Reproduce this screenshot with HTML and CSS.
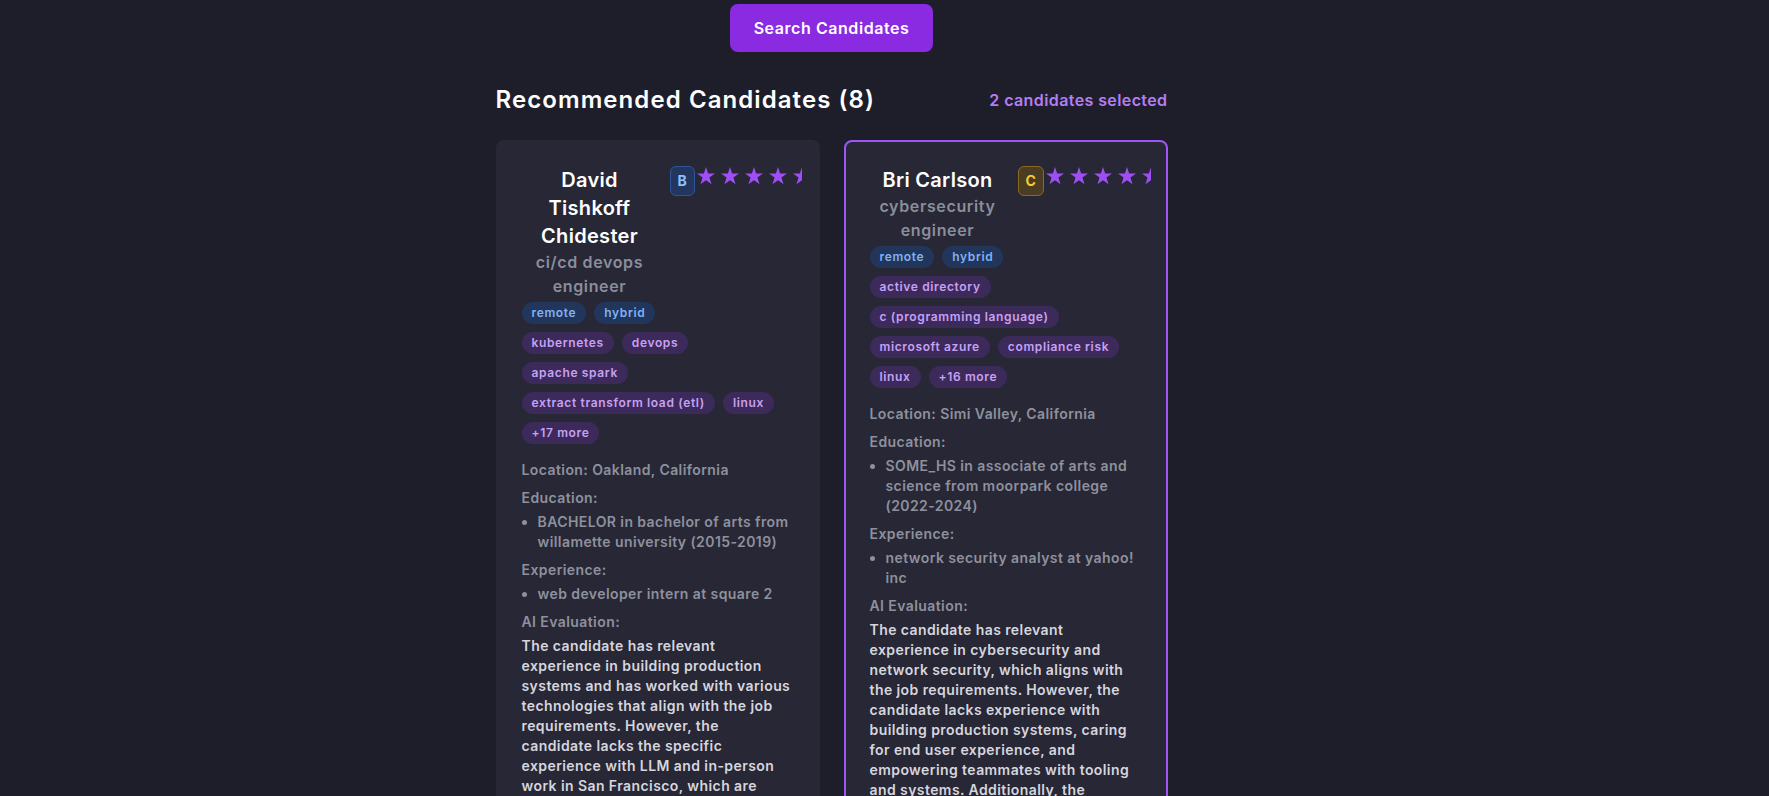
FILE: index.html
```html
<!DOCTYPE html>
<html lang="en">
<head>
<meta charset="utf-8">
<title>Recommended Candidates</title>
<link rel="stylesheet" href="styles.css">
</head>
<body>
<div class="page">
  <main class="content">
    <div class="actions">
      <button class="search-btn" type="button">Search Candidates</button>
    </div>

    <div class="results-head">
      <h2 class="results-title">Recommended Candidates (8)</h2>
      <span class="selected-count">2 candidates selected</span>
    </div>

    <div class="grid">
      <article class="card">
        <div class="card-head">
          <div class="who">
            <h3 class="name">David Tishkoff Chidester</h3>
            <p class="role">ci/cd devops engineer</p>
          </div>
          <div class="rating">
            <span class="grade grade-b">B</span>
            <span class="stars">
              <svg class="star" viewBox="0 0 20 20"><polygon points="10,1 12.13,7.56 19.03,7.56 13.45,11.62 15.58,18.19 10,14.13 4.42,18.19 6.55,11.62 0.97,7.56 7.87,7.56"/></svg>
              <svg class="star" viewBox="0 0 20 20"><polygon points="10,1 12.13,7.56 19.03,7.56 13.45,11.62 15.58,18.19 10,14.13 4.42,18.19 6.55,11.62 0.97,7.56 7.87,7.56"/></svg>
              <svg class="star" viewBox="0 0 20 20"><polygon points="10,1 12.13,7.56 19.03,7.56 13.45,11.62 15.58,18.19 10,14.13 4.42,18.19 6.55,11.62 0.97,7.56 7.87,7.56"/></svg>
              <svg class="star" viewBox="0 0 20 20"><polygon points="10,1 12.13,7.56 19.03,7.56 13.45,11.62 15.58,18.19 10,14.13 4.42,18.19 6.55,11.62 0.97,7.56 7.87,7.56"/></svg>
              <span class="half-star"><svg class="star" viewBox="0 0 20 20"><polygon points="10,1 12.13,7.56 19.03,7.56 13.45,11.62 15.58,18.19 10,14.13 4.42,18.19 6.55,11.62 0.97,7.56 7.87,7.56"/></svg></span>
            </span>
          </div>
        </div>

        <div class="tags">
          <span class="tag tag-blue">remote</span>
          <span class="tag tag-blue">hybrid</span>
        </div>
        <div class="tags">
          <span class="tag tag-purple">kubernetes</span>
          <span class="tag tag-purple">devops</span>
          <span class="tag tag-purple">apache spark</span>
          <span class="tag tag-purple">extract transform load (etl)</span>
          <span class="tag tag-purple">linux</span>
          <span class="tag tag-purple">+17 more</span>
        </div>

        <div class="details">
          <p>Location: Oakland, California</p>
          <div class="section">
            <p class="label">Education:</p>
            <ul class="list">
              <li>BACHELOR in bachelor of arts from willamette university (2015-2019)</li>
            </ul>
          </div>
          <div class="section">
            <p class="label">Experience:</p>
            <ul class="list">
              <li>web developer intern at square 2</li>
            </ul>
          </div>
          <div class="section">
            <p class="label">AI Evaluation:</p>
            <p class="eval">The candidate has relevant experience in building production systems and has worked with various technologies that align with the job requirements. However, the candidate lacks the specific experience with LLM and in-person work in San Francisco, which are important for this role.</p>
          </div>
        </div>
      </article>

      <article class="card selected">
        <div class="card-head">
          <div class="who">
            <h3 class="name">Bri Carlson</h3>
            <p class="role">cybersecurity engineer</p>
          </div>
          <div class="rating">
            <span class="grade grade-c">C</span>
            <span class="stars">
              <svg class="star" viewBox="0 0 20 20"><polygon points="10,1 12.13,7.56 19.03,7.56 13.45,11.62 15.58,18.19 10,14.13 4.42,18.19 6.55,11.62 0.97,7.56 7.87,7.56"/></svg>
              <svg class="star" viewBox="0 0 20 20"><polygon points="10,1 12.13,7.56 19.03,7.56 13.45,11.62 15.58,18.19 10,14.13 4.42,18.19 6.55,11.62 0.97,7.56 7.87,7.56"/></svg>
              <svg class="star" viewBox="0 0 20 20"><polygon points="10,1 12.13,7.56 19.03,7.56 13.45,11.62 15.58,18.19 10,14.13 4.42,18.19 6.55,11.62 0.97,7.56 7.87,7.56"/></svg>
              <svg class="star" viewBox="0 0 20 20"><polygon points="10,1 12.13,7.56 19.03,7.56 13.45,11.62 15.58,18.19 10,14.13 4.42,18.19 6.55,11.62 0.97,7.56 7.87,7.56"/></svg>
              <span class="half-star"><svg class="star" viewBox="0 0 20 20"><polygon points="10,1 12.13,7.56 19.03,7.56 13.45,11.62 15.58,18.19 10,14.13 4.42,18.19 6.55,11.62 0.97,7.56 7.87,7.56"/></svg></span>
            </span>
          </div>
        </div>

        <div class="tags">
          <span class="tag tag-blue">remote</span>
          <span class="tag tag-blue">hybrid</span>
        </div>
        <div class="tags">
          <span class="tag tag-purple">active directory</span>
          <span class="tag tag-purple">c (programming language)</span>
          <span class="tag tag-purple">microsoft azure</span>
          <span class="tag tag-purple">compliance risk</span>
          <span class="tag tag-purple">linux</span>
          <span class="tag tag-purple">+16 more</span>
        </div>

        <div class="details">
          <p>Location: Simi Valley, California</p>
          <div class="section">
            <p class="label">Education:</p>
            <ul class="list">
              <li>SOME_HS in associate of arts and science from moorpark college (2022-2024)</li>
            </ul>
          </div>
          <div class="section">
            <p class="label">Experience:</p>
            <ul class="list">
              <li>network security analyst at yahoo! inc</li>
            </ul>
          </div>
          <div class="section">
            <p class="label">AI Evaluation:</p>
            <p class="eval">The candidate has relevant experience in cybersecurity and network security, which aligns with the job requirements. However, the candidate lacks experience with building production systems, caring for end user experience, and empowering teammates with tooling and systems. Additionally, the candidate does not have experience with LLM technologies.</p>
          </div>
        </div>
      </article>
    </div>
  </main>
</div>
</body>
</html>
```
FILE: styles.css
```css
* { box-sizing: border-box; }

html, body { margin: 0; }

body {
  background: #1e1e2b;
  font-family: Inter, "Open Sans", "Liberation Sans", sans-serif;
  letter-spacing: 0.04em;
  color: #ffffff;
}

.page {
  display: flex;
  justify-content: center;
  padding: 4px 106px 40px 0;
}

.content {
  width: 672px;
}

.actions {
  display: flex;
  justify-content: center;
  margin-bottom: 32px;
}

.search-btn {
  background: #8a2be2;
  color: #ffffff;
  border: 0;
  border-radius: 8px;
  padding: 12px 24px;
  font-family: inherit;
  font-size: 16px;
  line-height: 24px;
  font-weight: 600;
  letter-spacing: 0.035em;
}

.results-head {
  display: flex;
  justify-content: space-between;
  align-items: center;
  margin-bottom: 24px;
}

.results-title {
  margin: 0;
  font-size: 24px;
  line-height: 32px;
  font-weight: 600;
  letter-spacing: 0.045em;
  color: #ffffff;
}

.selected-count {
  color: #b47df4;
  font-size: 16px;
  line-height: 24px;
  font-weight: 600;
  letter-spacing: 0.025em;
}

.grid {
  display: grid;
  grid-template-columns: 1fr 1fr;
  gap: 24px;
  align-items: start;
}

.card {
  background: #272736;
  border: 2px solid transparent;
  border-radius: 8px;
  padding: 24px;
}

.card.selected {
  border-color: #a056f5;
}

.card-head {
  display: grid;
  grid-template-columns: minmax(0, 1fr) minmax(0, 1fr);
}

.who {
  min-width: 0;
  text-align: center;
}

.name {
  margin: 0;
  font-size: 20px;
  line-height: 28px;
  font-weight: 600;
  letter-spacing: 0.015em;
  color: #ffffff;
}

.role {
  margin: 0;
  font-size: 16px;
  line-height: 24px;
  font-weight: 600;
  color: #8b8e9a;
}

.rating {
  min-width: 0;
  display: flex;
  align-items: flex-start;
  padding-left: 12px;
  white-space: nowrap;
}

.grade {
  display: inline-block;
  border: 1px solid;
  border-radius: 6px;
  padding: 4px 7px;
  font-size: 14px;
  line-height: 20px;
  font-weight: 700;
  letter-spacing: 0;
}

.grade-b {
  background: #23365e;
  border-color: #2d5597;
  color: #8fc0f7;
}

.grade-c {
  background: #4a3d24;
  border-color: #8b6a20;
  color: #f5cd2e;
}

.stars {
  display: flex;
  gap: 4px;
  margin-left: 1px;
}

.star {
  display: block;
  width: 20px;
  height: 20px;
  fill: #9d4ef5;
  flex: none;
}

.half-star {
  display: block;
  width: 10px;
  overflow: hidden;
}

.tags {
  display: flex;
  flex-wrap: wrap;
  gap: 8px;
  margin-top: 4px;
}

.tags + .tags {
  margin-top: 8px;
}

.tag {
  font-size: 12px;
  line-height: 16px;
  font-weight: 600;
  padding: 3px 10px;
  border-radius: 999px;
  white-space: nowrap;
}

.tag-blue {
  background: #22355a;
  color: #7fb3f2;
}

.tag-purple {
  background: #3c2a5b;
  color: #c8a0f4;
}

.details {
  margin-top: 16px;
  font-size: 14px;
  line-height: 20px;
  font-weight: 600;
  letter-spacing: 0.03em;
  color: #8e919d;
}

.details p {
  margin: 0;
}

.section {
  margin-top: 8px;
}

.details .label {
  margin-bottom: 4px;
}

.list {
  margin: 0;
  padding-left: 16px;
}

.details .eval {
  color: #d6d6de;
}
```
